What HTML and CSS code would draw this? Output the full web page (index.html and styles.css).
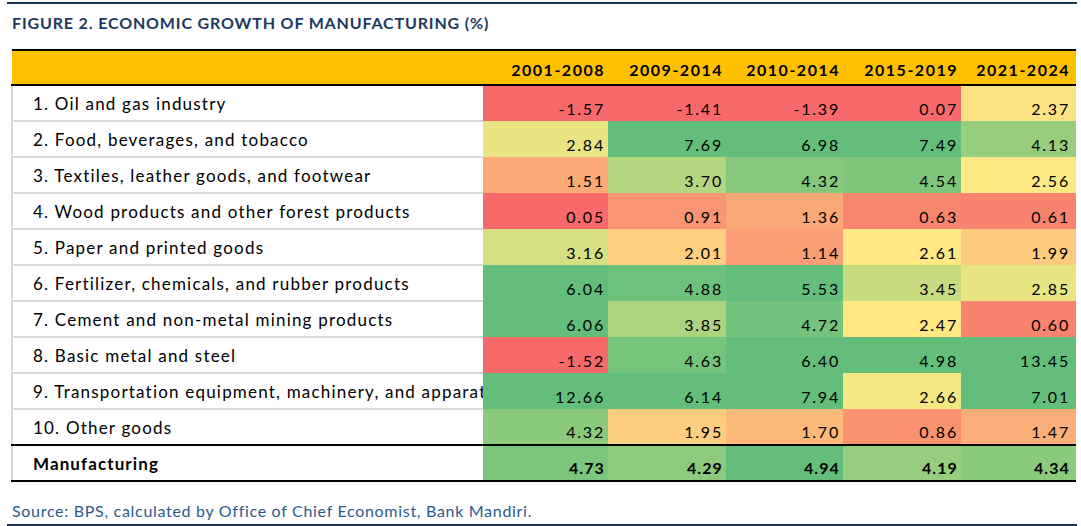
FILE: index.html
```html
<!DOCTYPE html>
<html lang="en">
<head>
<meta charset="utf-8">
<title>Figure 2. Economic growth of manufacturing</title>
<link rel="stylesheet" href="styles.css">
</head>
<body>
<div class="page">
  <div class="rule top"></div>
  <h1 class="title">FIGURE 2. ECONOMIC GROWTH OF MANUFACTURING (%)</h1>
  <table class="grid">
    <colgroup>
      <col class="c-label"><col class="c1"><col class="c2"><col class="c3"><col class="c4"><col class="c5">
    </colgroup>
    <thead>
      <tr class="head">
        <th class="label"></th><th>2001-2008</th><th>2009-2014</th><th>2010-2014</th><th>2015-2019</th><th class="last">2021-2024</th>
      </tr>
    </thead>
    <tbody>
      <tr><td class="label">1. Oil and gas industry</td><td style="background:#F8696B">-1.57</td><td style="background:#F8696B">-1.41</td><td style="background:#F8696B">-1.39</td><td style="background:#F8696B">0.07</td><td class="last" style="background:#FDE283">2.37</td></tr>
      <tr><td class="label">2. Food, beverages, and tobacco</td><td style="background:#E9E583">2.84</td><td style="background:#63BE7B">7.69</td><td style="background:#63BE7B">6.98</td><td style="background:#63BE7B">7.49</td><td class="last" style="background:#98CD7E">4.13</td></tr>
      <tr><td class="label">3. Textiles, leather goods, and footwear</td><td style="background:#FBAA77">1.51</td><td style="background:#B5D680">3.70</td><td style="background:#86C87D">4.32</td><td style="background:#7FC67C">4.54</td><td class="last" style="background:#FFE984">2.56</td></tr>
      <tr><td class="label">4. Wood products and other forest products</td><td style="background:#F8696B">0.05</td><td style="background:#F99572">0.91</td><td style="background:#FBA877">1.36</td><td style="background:#F8866F">0.63</td><td class="last" style="background:#F8836F">0.61</td></tr>
      <tr><td class="label">5. Paper and printed goods</td><td style="background:#D6DF81">3.16</td><td style="background:#FDCF7F">2.01</td><td style="background:#FA9F75">1.14</td><td style="background:#FFE884">2.61</td><td class="last" style="background:#FDCB7E">1.99</td></tr>
      <tr><td class="label">6. Fertilizer, chemicals, and rubber products</td><td style="background:#63BE7B">6.04</td><td style="background:#6DC17C">4.88</td><td style="background:#63BE7B">5.53</td><td style="background:#C8DB81">3.45</td><td class="last" style="background:#E8E583">2.85</td></tr>
      <tr><td class="label">7. Cement and non-metal mining products</td><td style="background:#63BE7B">6.06</td><td style="background:#ACD47F">3.85</td><td style="background:#73C37C">4.72</td><td style="background:#FFE884">2.47</td><td class="last" style="background:#F8836F">0.60</td></tr>
      <tr><td class="label">8. Basic metal and steel</td><td style="background:#F8696B">-1.52</td><td style="background:#77C47C">4.63</td><td style="background:#63BE7B">6.40</td><td style="background:#63BE7B">4.98</td><td class="last" style="background:#63BE7B">13.45</td></tr>
      <tr><td class="label">9. Transportation equipment, machinery, and apparatus</td><td style="background:#63BE7B">12.66</td><td style="background:#63BE7B">6.14</td><td style="background:#63BE7B">7.94</td><td style="background:#F3E883">2.66</td><td class="last" style="background:#63BE7B">7.01</td></tr>
      <tr class="pre-total"><td class="label">10. Other goods</td><td style="background:#8BC97D">4.32</td><td style="background:#FDCE7F">1.95</td><td style="background:#FCB97A">1.70</td><td style="background:#F8926F">0.86</td><td class="last" style="background:#FBAF78">1.47</td></tr>
      <tr class="total"><td class="label">Manufacturing</td><td style="background:#7BC57C">4.73</td><td style="background:#8DCA7D">4.29</td><td style="background:#63BE7B">4.94</td><td style="background:#97CD7E">4.19</td><td class="last" style="background:#8BC97D">4.34</td></tr>
    </tbody>
  </table>
  <p class="source">Source: BPS, calculated by Office of Chief Economist, Bank Mandiri.</p>
  <div class="rule bottom"></div>
</div>
</body>
</html>
```

FILE: styles.css
```css
html, body {
  margin: 0;
  padding: 0;
  background: #ffffff;
}

.page {
  width: 1081px;
  height: 526px;
  font-family: Lato, "Open Sans", "Liberation Sans", sans-serif;
  color: #000;
  overflow: hidden;
}

.rule {
  margin-left: 7px;
  width: 1070px;
  height: 2px;
  background: #1d3557;
}

.rule.top {
  margin-top: 2px;
}

.title {
  margin: 9px 0 0 12px;
  font-size: 16px;
  line-height: 20px;
  font-weight: 700;
  color: #1b3a5e;
  letter-spacing: 0.85px;
}

.grid {
  margin: 16px 0 0 11px;
  border-collapse: collapse;
  table-layout: fixed;
  width: 1064px;
  font-size: 16px;
}

.c-label { width: 471px; }
.c1 { width: 125px; }
.c2 { width: 118px; }
.c3 { width: 117px; }
.c4 { width: 118px; }
.c5 { width: 115px; }

.grid th,
.grid td {
  padding: 0 3px 0 0;
  text-align: right;
  white-space: nowrap;
}

.grid td.last,
.grid th.last {
  padding-right: 6px;
}

.head th {
  background: #ffc000;
  height: 35px;
  padding-top: 3px;
  font-weight: 700;
  font-size: 16px;
  letter-spacing: 1.5px;
  border-top: 2px solid #000;
  border-bottom: 2px solid #000;
  box-sizing: border-box;
}

.grid tbody td {
  height: 36px;
  vertical-align: bottom;
  padding-bottom: 2px;
  line-height: 20px;
  letter-spacing: 1.8px;
  box-sizing: border-box;
}

.grid td.label {
  text-align: left;
  vertical-align: middle;
  padding: 1px 0 0 20px;
  font-size: 17px;
  letter-spacing: 1.2px;
  border-left: 2px solid #d9d9d9;
  border-bottom: 2px solid #d9d9d9;
  background: #ffffff;
  overflow: hidden;
  text-overflow: clip;
}

.pre-total td,
.grid .pre-total td.label {
  border-bottom: 2px solid #000;
}

.total td {
  font-weight: 700;
}

.grid .total td,
.grid .total td.label {
  border-bottom: 2px solid #000;
  letter-spacing: 1.1px;
}

.source {
  margin: 19px 0 0 12px;
  font-size: 16px;
  line-height: 20px;
  color: #2a5b8c;
  letter-spacing: 0.7px;
}

.rule.bottom {
  margin-top: 3px;
}
```
